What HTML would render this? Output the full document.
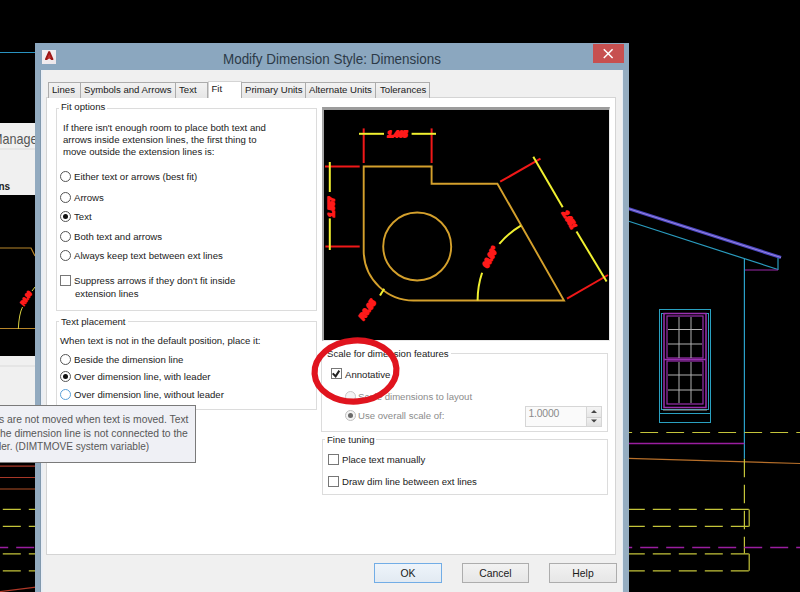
<!DOCTYPE html>
<html><head><meta charset="utf-8">
<style>
*{margin:0;padding:0;box-sizing:border-box}
html,body{width:800px;height:592px;overflow:hidden;background:#000}
body{position:relative;font-family:"Liberation Sans",sans-serif;font-size:9.6px;color:#1a1a1a}
.a{position:absolute}
svg{position:absolute;left:0;top:0}
.t{position:absolute;white-space:nowrap;line-height:12px}
.grp{position:absolute;border:1px solid #dcdcdc}
.gl{position:absolute;background:#fff;padding:0 2px;line-height:12px;white-space:nowrap}
.rad{position:absolute;width:11px;height:11px;border:1px solid #555;border-radius:50%;background:#fff}
.rad.on::after{content:"";position:absolute;left:2px;top:2px;width:5px;height:5px;border-radius:50%;background:#111}
.rad.g::after{background:#6a6a6a}
.chk{position:absolute;width:11px;height:11px;border:1px solid #777;background:#fff}
.tab{position:absolute;top:82px;height:16px;border:1px solid #acacac;border-bottom:none;background:linear-gradient(#f2f2f2,#e6e6e6);font-size:9.6px;line-height:12px;text-align:left;padding-left:3px;padding-top:1px;white-space:nowrap}
.btn{position:absolute;top:563px;height:20px;border:1px solid #adadad;background:linear-gradient(#f2f2f2,#e6e6e6);text-align:center;line-height:20px;font-size:10.4px}
</style></head><body>

<!-- CAD background -->
<svg width="800" height="592" viewBox="0 0 800 592">
  <!-- top-left blue line -->
  <line x1="0" y1="52.5" x2="36" y2="52.5" stroke="#2a92c0" stroke-width="1.2"/>
  <!-- background manager dialog (left) -->
  <rect x="0" y="123" width="36" height="72" fill="#f0f0f0"/>
  <line x1="0" y1="149" x2="36" y2="149" stroke="#dadada" stroke-width="1"/>
  <rect x="0" y="356" width="36" height="50" fill="#f0f0f0"/>
  <line x1="0" y1="366" x2="36" y2="366" stroke="#dadada" stroke-width="1"/>
  <!-- left preview drawing -->
  <polyline points="0,248 31,248 35,256" fill="none" stroke="#b8862a" stroke-width="1.2"/>
  <line x1="0" y1="328.5" x2="36" y2="328.5" stroke="#b8862a" stroke-width="1.2"/>
  <path d="M18.3,329 Q19,314 22.5,307" fill="none" stroke="#d8d040" stroke-width="1"/><line x1="32" y1="291" x2="35" y2="287" stroke="#d8d040" stroke-width="1"/>
  <text x="0" y="0" text-anchor="middle" textLength="15" lengthAdjust="spacingAndGlyphs" transform="translate(27.8,299.6) rotate(-57)" fill="#ff1a1a" stroke="#ff1a1a" stroke-width="1.3" font-family="Liberation Sans" font-weight="bold" font-style="italic" font-size="7px">R0.80</text>
  <!-- left lower CAD lines -->
  <line x1="0" y1="466.1" x2="36" y2="466.1" stroke="#a83828" stroke-width="1.2"/>
  <line x1="0" y1="477.5" x2="36" y2="477.5" stroke="#a83828" stroke-width="1.2"/>
  <line x1="0" y1="489" x2="36" y2="489" stroke="#b04e26" stroke-width="1.2"/>
  <line x1="0" y1="591.6" x2="36" y2="587.2" stroke="#b03828" stroke-width="1.2"/>

  <!-- right CAD house -->
  <line x1="628" y1="208.5" x2="781" y2="257.5" stroke="#4a48c0" stroke-width="3.4"/>
  <line x1="628" y1="208.5" x2="781" y2="257.5" stroke="#9c84e0" stroke-width="1"/>
  <line x1="628" y1="221" x2="778" y2="269.5" stroke="#2a9cbf" stroke-width="1.2"/>
  <line x1="778" y1="258" x2="778" y2="270" stroke="#2a9cbf" stroke-width="1.2"/>
  <line x1="745" y1="270" x2="778" y2="270" stroke="#9a28a8" stroke-width="1.2"/>
  <line x1="744.4" y1="259" x2="744.4" y2="458.8" stroke="#2aa0c8" stroke-width="1.2"/>
  <!-- window -->
  <rect x="659.5" y="309.5" width="51" height="113" fill="none" stroke="#2aa0c0" stroke-width="1"/>
  <rect x="661.5" y="313.5" width="47" height="96" fill="none" stroke="#2aa0c0" stroke-width="1"/>
  <rect x="664" y="313.5" width="42" height="94" fill="none" stroke="#9a30b0" stroke-width="1.5"/>
  <rect x="667" y="316" width="36" height="42" fill="none" stroke="#9a30b0" stroke-width="1.2"/>
  <rect x="667" y="361" width="36" height="43" fill="none" stroke="#9a30b0" stroke-width="1.2"/>
  <line x1="664" y1="359.5" x2="706" y2="359.5" stroke="#9a30b0" stroke-width="1.5"/>
  <g stroke="#b0b0b0" stroke-width="1">
    <line x1="679" y1="317" x2="679" y2="358"/><line x1="691" y1="317" x2="691" y2="358"/>
    <line x1="668" y1="329.5" x2="702" y2="329.5"/><line x1="668" y1="344" x2="702" y2="344"/>
    <line x1="679" y1="362" x2="679" y2="403"/><line x1="691" y1="362" x2="691" y2="403"/>
    <line x1="668" y1="375" x2="702" y2="375"/><line x1="668" y1="390" x2="702" y2="390"/>
  </g>
  <line x1="663" y1="410" x2="707" y2="410" stroke="#9a9a9a" stroke-width="1"/>
  <line x1="659.5" y1="413.5" x2="710.5" y2="413.5" stroke="#2aa0c0" stroke-width="1"/>
  <!-- dashed / solid horizontal lines -->
  <line x1="-9.7" y1="432.5" x2="800" y2="432.5" stroke="#c4c43a" stroke-width="1.2" stroke-dasharray="17.8,8.2"/>
  <line x1="628" y1="443.6" x2="744.4" y2="443.6" stroke="#9a1ea0" stroke-width="1.5"/>
  <line x1="628" y1="458.3" x2="800" y2="463.5" stroke="#b8702a" stroke-width="1.2"/>
  <line x1="744.4" y1="458.8" x2="744.4" y2="553.5" stroke="#c4c43a" stroke-width="1.2" stroke-dasharray="18.5,7.5"/>
  <line x1="-23.2" y1="509.4" x2="749.2" y2="509.4" stroke="#c4c43a" stroke-width="1.2" stroke-dasharray="18,8"/>
  <line x1="-23.2" y1="526.4" x2="749.2" y2="526.4" stroke="#c4c43a" stroke-width="1.2" stroke-dasharray="18,8"/>
  <line x1="749.2" y1="509.4" x2="749.2" y2="526.4" stroke="#c4c43a" stroke-width="1.2"/>
  <line x1="-9.8" y1="547.6" x2="800" y2="547.6" stroke="#9a1ea0" stroke-width="1.5" stroke-dasharray="18,8"/>
  <line x1="-23.2" y1="553.8" x2="749.2" y2="553.8" stroke="#c4c43a" stroke-width="1.2" stroke-dasharray="18,8"/>
  <line x1="-23.2" y1="570.8" x2="749.2" y2="570.8" stroke="#c4c43a" stroke-width="1.2" stroke-dasharray="18,8"/>
  <line x1="749.2" y1="553.8" x2="749.2" y2="570.8" stroke="#c4c43a" stroke-width="1.2"/>
</svg>

<!-- Dialog frame -->
<div class="a" style="left:35px;top:43px;width:594px;height:549px;background:#8ba7bf"></div>
<div class="a" style="left:593px;top:44px;width:31px;height:19px;background:#c75050"></div>
<svg width="800" height="592" style="pointer-events:none">
  <g stroke="#fff" stroke-width="1.5"><line x1="603.8" y1="49.2" x2="612.6" y2="58"/><line x1="612.6" y1="49.2" x2="603.8" y2="58"/></g>
</svg>
<div class="t" style="left:222.5px;top:50px;font-size:14.4px;line-height:18px;color:#2b3a48;transform:scaleX(0.933);transform-origin:0 0">Modify Dimension Style: Dimensions</div>
<!-- app icon -->
<div class="a" style="left:42px;top:50px;width:14px;height:14px;background:linear-gradient(135deg,#f6f2f4,#ece6ea)"></div>
<svg width="800" height="592"><path d="M48.4,51.2 L50,51.2 L53.4,59 Q53.6,60 52.8,60 L51.4,60 L49.2,58.2 L47,60 L45.6,60 Q44.8,60 45,59 Z" fill="#9c1616"/><path d="M49.2,54 L51.2,58.2 L47.2,58.2 Z" fill="#c43030"/></svg>

<!-- client area -->
<div class="a" style="left:41px;top:70px;width:582px;height:522px;background:#f0f0f0"></div>
<div class="a" style="left:35px;top:70px;width:5px;height:522px;background:#92aabf"></div>
<div class="a" style="left:40px;top:70px;width:1px;height:522px;background:#8299ad"></div>
<div class="a" style="left:41px;top:70px;width:2px;height:522px;background:#e9eef5"></div>
<div class="a" style="left:623px;top:70px;width:6px;height:522px;background:#95adc1"></div>
<div class="a" style="left:621.5px;top:70px;width:1.5px;height:522px;background:#e6edf5"></div>

<!-- tab panel -->
<div class="a" style="left:46px;top:97px;width:570px;height:458px;background:#fff;border:1px solid #d4d4d4"></div>
<div class="tab" style="left:48px;width:33px">Lines</div>
<div class="tab" style="left:80px;width:96px">Symbols and Arrows</div>
<div class="tab" style="left:175px;width:33px">Text</div>
<div class="tab" style="left:207.5px;top:81px;height:17px;width:34.5px;background:#fff;border-color:#d4d4d4;padding-left:3px;padding-top:1px">Fit</div>
<div class="tab" style="left:241px;width:65px">Primary Units</div>
<div class="tab" style="left:305px;width:71px">Alternate Units</div>
<div class="tab" style="left:375px;width:55px;padding-left:4px">Tolerances</div>

<!-- Fit options group -->
<div class="grp" style="left:55.5px;top:107.5px;width:261px;height:203px"></div>
<div class="gl" style="left:59px;top:101px">Fit options</div>
<div class="t" style="left:63px;top:122px">If there isn't enough room to place both text and</div>
<div class="t" style="left:63px;top:134px">arrows inside extension lines, the first thing to</div>
<div class="t" style="left:63px;top:146px">move outside the extension lines is:</div>
<div class="rad" style="left:60px;top:171px"></div><div class="t" style="left:74px;top:171px">Either text or arrows (best fit)</div>
<div class="rad" style="left:60px;top:192px"></div><div class="t" style="left:74px;top:192px">Arrows</div>
<div class="rad on" style="left:60px;top:211px"></div><div class="t" style="left:74px;top:211px">Text</div>
<div class="rad" style="left:60px;top:231px"></div><div class="t" style="left:74px;top:231px">Both text and arrows</div>
<div class="rad" style="left:60px;top:250px"></div><div class="t" style="left:74px;top:250px">Always keep text between ext lines</div>
<div class="chk" style="left:60px;top:275px"></div>
<div class="t" style="left:74px;top:275px">Suppress arrows if they don't fit inside</div>
<div class="t" style="left:75px;top:288px">extension lines</div>

<!-- Text placement group -->
<div class="grp" style="left:56px;top:321px;width:260.5px;height:89px"></div>
<div class="gl" style="left:59px;top:316px">Text placement</div>
<div class="t" style="left:60px;top:335px">When text is not in the default position, place it:</div>
<div class="rad" style="left:60px;top:354px"></div><div class="t" style="left:74px;top:354px">Beside the dimension line</div>
<div class="rad on" style="left:60px;top:371px"></div><div class="t" style="left:74px;top:371px">Over dimension line, with leader</div>
<div class="rad" style="left:60px;top:389px;border-color:#5aa0d8"></div><div class="t" style="left:74px;top:389px">Over dimension line, without leader</div>

<!-- preview -->
<div class="a" style="left:322px;top:107px;width:288px;height:234px;background:#000;border-top:3px solid #9c9c9c;border-left:2px solid #a4a4a4;border-right:1px solid #e8e8e8;border-bottom:1px solid #e8e8e8"></div>

<!-- preview drawing -->
<svg width="800" height="592" viewBox="0 0 800 592">
  <g fill="none" stroke="#d4a02c" stroke-width="1.9">
    <path d="M363.7,166.5 H431.6 V183.7 H497.4 L564,300.5 H415 A50,50 0 0 1 363.7,252 Z"/>
    <circle cx="417.2" cy="246.5" r="34"/>
  </g>
  <g stroke="#f01818" stroke-width="2">
    <line x1="363.7" y1="128.4" x2="363.7" y2="163"/>
    <line x1="431.6" y1="128.4" x2="431.6" y2="163"/>
    <line x1="325" y1="166.5" x2="359.7" y2="166.5"/>
    <line x1="325.4" y1="246.6" x2="359.7" y2="246.6"/>
    <line x1="500.2" y1="181.7" x2="540.5" y2="158.7"/>
    <line x1="567" y1="298.6" x2="608" y2="275"/>
  </g>
  <g stroke="#f0f030" stroke-width="2" fill="none">
    <line x1="359" y1="133.8" x2="384" y2="133.8"/>
    <line x1="411.6" y1="133.8" x2="436" y2="133.8"/>
    <line x1="329.8" y1="162" x2="329.8" y2="192"/>
    <line x1="329.8" y1="218.4" x2="329.8" y2="250"/>
    <line x1="533.3" y1="156.7" x2="562.7" y2="207.2"/>
    <line x1="576.5" y1="231.6" x2="606.6" y2="281.4"/>
    <path d="M477.6,300.5 A86.5,86.5 0 0 1 482.1,272.7"/>
    <path d="M499.3,243.8 A86.5,86.5 0 0 1 520.9,225.6"/>
    <line x1="384.2" y1="288.7" x2="380" y2="295.6"/>
  </g>
  <g fill="#ff1a1a" stroke="#ff1a1a" stroke-width="1.9" stroke-linejoin="round" font-family="Liberation Sans" font-weight="bold" font-style="italic" font-size="9px">
    <text x="397.3" y="136.6" text-anchor="middle" textLength="20" lengthAdjust="spacingAndGlyphs">1.465</text>
    <text x="0" y="0" text-anchor="middle" textLength="20" lengthAdjust="spacingAndGlyphs" transform="translate(333.6,207) rotate(-90)">1.557</text>
    <text x="0" y="0" text-anchor="middle" textLength="19" lengthAdjust="spacingAndGlyphs" transform="translate(566.6,221.2) rotate(59.6)">2.651</text>
    <text x="0" y="0" text-anchor="middle" textLength="22" lengthAdjust="spacingAndGlyphs" transform="translate(492.6,258.6) rotate(-62)">60.00°</text>
    <text x="0" y="0" text-anchor="middle" textLength="22" lengthAdjust="spacingAndGlyphs" transform="translate(369.6,311.4) rotate(-55)">R0.05</text>
  </g>
</svg>

<!-- Scale group -->
<div class="grp" style="left:321px;top:353px;width:287px;height:78.5px"></div>
<div class="gl" style="left:325px;top:348px">Scale for dimension features</div>
<div class="chk" style="left:331px;top:368px"></div>
<div class="t" style="left:345px;top:368.5px">Annotative</div>
<div class="rad" style="left:345px;top:391px;border-color:#c8c8c8;background:#f4f4f4"></div><div class="t" style="left:358px;top:391px;color:#8c8c8c">Scale dimensions to layout</div>
<div class="rad on g" style="left:345px;top:410px;border-color:#c0c0c0;background:#f4f4f4"></div><div class="t" style="left:358px;top:410px;color:#8c8c8c">Use overall scale of:</div>
<div class="a" style="left:525px;top:406px;width:77px;height:21px;border:1px solid #d6d6d6;background:#fafafa"></div>
<div class="t" style="left:528.5px;top:407.5px;color:#8a8a8a;font-size:10.4px;letter-spacing:-0.2px">1.0000</div>

<!-- Fine tuning -->
<div class="grp" style="left:322px;top:439px;width:286px;height:56px"></div>
<div class="gl" style="left:325px;top:434px">Fine tuning</div>
<div class="chk" style="left:328px;top:454px"></div><div class="t" style="left:342px;top:454px">Place text manually</div>
<div class="chk" style="left:328px;top:476px"></div><div class="t" style="left:342px;top:476px">Draw dim line between ext lines</div>

<!-- buttons -->
<div class="btn" style="left:374px;width:68px;border-color:#72ade6;background:linear-gradient(#eef4fa,#e2eaf2)">OK</div>
<div class="btn" style="left:462px;width:67px">Cancel</div>
<div class="btn" style="left:549px;width:68px">Help</div>

<!-- checkmark -->
<svg width="800" height="592"><path d="M332.7,373.4 L335.6,376.3 L339.3,370.6" fill="none" stroke="#222" stroke-width="2"/></svg>
<!-- spin buttons -->
<div class="a" style="left:586px;top:407px;width:15px;height:9.5px;background:linear-gradient(#f4f4f4,#e6e6e6);border-left:1px solid #d6d6d6"></div>
<div class="a" style="left:586px;top:416.5px;width:15px;height:9.5px;background:linear-gradient(#f0f0f0,#e2e2e2);border-left:1px solid #d6d6d6;border-top:1px solid #d0d0d0"></div>
<svg width="800" height="592"><path d="M591,413 L594,410 L597,413Z" fill="#444"/><path d="M591,419.5 L594,422.5 L597,419.5Z" fill="#444"/></svg>

<!-- red ellipse -->
<svg width="800" height="592"><ellipse cx="355.5" cy="371" rx="41" ry="30.5" fill="none" stroke="#e0141e" stroke-width="6.2" transform="rotate(-4 355.5 371)"/></svg>

<!-- left background dialog texts -->
<div class="a" style="left:0;top:120px;width:35px;height:80px;overflow:hidden"><div class="t" style="left:-8px;top:10px;font-size:15px;line-height:18px;color:#555;transform:scaleX(0.84);transform-origin:0 0">Manage</div>
<div class="t" style="left:-1.5px;top:60.5px;font-size:10px;color:#222;font-weight:bold">ns</div></div>

<!-- tooltip -->
<div class="a" style="left:-2px;top:405px;width:198px;height:58px;background:#eff0f5;border:1px solid #7a7a7a"></div>
<div class="t" style="left:-0.8px;top:413px;font-size:11.4px;line-height:13.5px;color:#575757;transform:scaleX(0.905);transform-origin:0 0">s are not moved when text is moved. Text</div>
<div class="t" style="left:-0.5px;top:426.5px;font-size:11.4px;line-height:13.5px;color:#575757;transform:scaleX(0.91);transform-origin:0 0">he dimension line is not connected to the</div>
<div class="t" style="left:-1.5px;top:440px;font-size:11.4px;line-height:13.5px;color:#575757;transform:scaleX(0.885);transform-origin:0 0">ler. (DIMTMOVE system variable)</div>

</body></html>
